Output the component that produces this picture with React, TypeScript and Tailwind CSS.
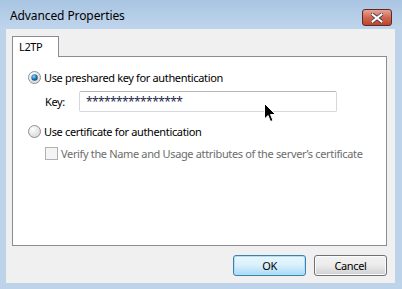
import React from "react";

const font = { fontFamily: '"Noto Sans", "Open Sans", sans-serif' };

function Radio({ checked }: { checked: boolean }) {
  return (
    <svg width="13" height="13" viewBox="0 0 13 13" className="shrink-0">
      <defs>
        <radialGradient id={checked ? "rgc" : "rgu"} cx="0.35" cy="0.3" r="0.8">
          <stop offset="0" stopColor="#ffffff" />
          <stop offset="1" stopColor="#d4d4d4" />
        </radialGradient>
        <radialGradient id="dot" cx="0.4" cy="0.35" r="0.7">
          <stop offset="0" stopColor="#8fd4f6" />
          <stop offset="0.6" stopColor="#1c73ad" />
          <stop offset="1" stopColor="#0a3f6b" />
        </radialGradient>
      </defs>
      <circle cx="6.5" cy="6.5" r="6" fill={`url(#${checked ? "rgc" : "rgu"})`} stroke="#8e8f8f" strokeWidth="1" />
      {checked && <circle cx="6.5" cy="6.5" r="3.2" fill="url(#dot)" />}
    </svg>
  );
}

export default function App() {
  return (
    <div
      className="w-[402px] h-[289px] flex flex-col bg-[#bcd3ea] text-[11px] tracking-[-0.35px] text-black relative overflow-hidden whitespace-nowrap"
      style={font}
    >
      {/* Title bar */}
      <div className="h-[29px] shrink-0 flex items-start bg-gradient-to-b from-[#a9c5e2] to-[#bfd5ec]">
        <div className="pl-[10px] pt-[8px] leading-[15px] text-[12px] tracking-[-0.1px] text-[#000]">Advanced Properties</div>
        <div className="ml-auto mr-[10px] mt-[9px] w-[30px] h-[17px] rounded-[3px] border border-[#5a2a26] bg-gradient-to-b from-[#e9a394] via-[#d06650] to-[#c0432a] flex items-center justify-center">
          <svg width="12" height="10" viewBox="0 0 12 10">
            <path d="M1.5 1.5 L10.5 8.5 M10.5 1.5 L1.5 8.5" stroke="#3a3a4a" strokeWidth="3.6" strokeLinecap="square" />
            <path d="M1.5 1.5 L10.5 8.5 M10.5 1.5 L1.5 8.5" stroke="#ffffff" strokeWidth="2" strokeLinecap="square" />
          </svg>
        </div>
      </div>

      {/* Client area */}
      <div className="flex-1 ml-[6px] mr-[7px] mb-[6px] bg-[#f0f0f0] flex flex-col pt-[7px] pl-[6px] pr-[8px]">
        {/* Tab strip */}
        <div className="flex h-[20px] relative z-10">
          <div className="w-[47px] h-[21px] bg-white border border-b-0 border-[#898c95] pl-[6px] pt-[3px] leading-[14px]">
            L2TP
          </div>
        </div>
        {/* Tab panel */}
        <div className="h-[190px] bg-white border border-[#898c95] pl-[15px] pt-[14px] flex flex-col">
          <div className="flex items-center gap-[3px] h-[13px]">
            <Radio checked={true} />
            <span className="leading-[14px]">Use preshared key for authentication</span>
          </div>
          <div className="flex items-center mt-[7px] pl-[17px] h-[21px]">
            <span className="w-[34px] leading-[14px]">Key:</span>
            <div className="w-[258px] h-[21px] border border-[#d4d7dc] border-t-[#b3b6bc] rounded-[2px] bg-white flex items-center pl-[6px] text-[#1b2a4a] text-[12px] tracking-[-0.6px] leading-[14px]">
              ****************
            </div>
          </div>
          <div className="flex items-center gap-[3px] h-[13px] mt-[13px]">
            <Radio checked={false} />
            <span className="leading-[14px]">Use certificate for authentication</span>
          </div>
          <div className="flex items-center gap-[3px] h-[13px] mt-[9px] pl-[17px]">
            <div className="w-[13px] h-[13px] border border-[#b1b1b1] bg-[#f4f4f4] shrink-0" />
            <span className="leading-[14px] text-[#6d6d6d]">Verify the Name and Usage attributes of the server’s certificate</span>
          </div>
        </div>
        {/* Buttons */}
        <div className="flex justify-end gap-[8px] mt-[9px] pr-[0px]">
          <button className="w-[73px] h-[21px] rounded-[3px] border border-[#3c7fb1] bg-gradient-to-b from-[#eaf6fd] via-[#d9f0fc] to-[#a7d9f5] shadow-[inset_0_0_0_1px_#b0e0f8] text-[11px] tracking-[-0.35px] leading-[14px] text-black" style={font}>
            OK
          </button>
          <button className="w-[73px] h-[21px] rounded-[3px] border border-[#707070] bg-gradient-to-b from-[#f2f2f2] via-[#ebebeb] to-[#cfcfcf] shadow-[inset_0_0_0_1px_#fbfbfb] text-[11px] tracking-[-0.35px] leading-[14px] text-black" style={font}>
            Cancel
          </button>
        </div>
      </div>

      {/* Mouse cursor */}
      <svg className="absolute left-[264px] top-[103px]" width="13" height="20" viewBox="0 0 13 20">
        <path d="M0.5 0.5 L0.5 16 L4 12.5 L6.5 18.5 L9 17.5 L6.5 11.5 L11.5 11.5 Z" fill="#000" stroke="#fff" strokeWidth="1" strokeLinejoin="miter" />
      </svg>
    </div>
  );
}
